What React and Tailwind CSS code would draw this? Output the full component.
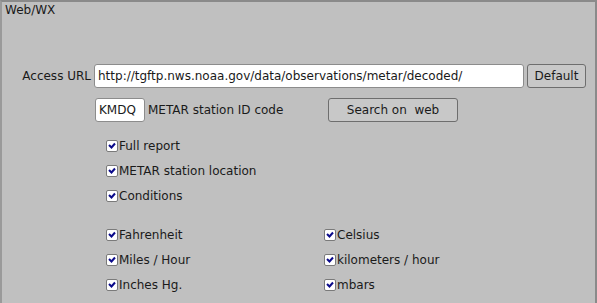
import React from "react";

function Check({ label }) {
  return (
    <div className="flex items-center h-[25px]">
      <span className="w-[12px] h-[12px] bg-white border border-[#7a7a7a] rounded-[2px] flex items-center justify-center mr-[1px]">
        <svg width="8" height="7" viewBox="0 0 8 7">
          <path d="M1 3 L3.5 5.5 L7 1.5" stroke="#0a0a8a" strokeWidth="2" fill="none" />
        </svg>
      </span>
      <span>{label}</span>
    </div>
  );
}

export default function App() {
  return (
    <div
      className="w-[597px] h-[303px] bg-[#c0c0c0] text-[#1a1a1a] text-[12px] overflow-hidden"
      style={{ fontFamily: '"DejaVu Sans", sans-serif' }}
    >
      <div className="h-[320px] border-t-2 border-l-2 border-r-2 border-[#8a8a8a] border-l-[#9a9a9a]">
        <div className="pl-[3px] pt-[1px] leading-[14px]">Web/WX</div>
        <div className="flex items-center mt-[47px] h-[24px]">
          <div className="w-[91px] text-right pr-[2px] text-[12px]">Access URL</div>
          <div className="w-[430px] h-[24px] bg-white border border-[#8c8c8c] rounded-[3px] flex items-center pl-[3px] ml-[1px]">
            http://tgftp.nws.noaa.gov/data/observations/metar/decoded/
          </div>
          <button className="ml-[3px] w-[59px] h-[24px] bg-[#c8c8c8] border border-[#6e6e6e] rounded-[3px] flex items-center justify-center">
            Default
          </button>
        </div>
        <div className="flex items-center mt-[10px] h-[24px]">
          <div className="ml-[93px] w-[50px] h-[24px] bg-white border border-[#8c8c8c] rounded-[3px] flex items-center pl-[3px]">
            KMDQ
          </div>
          <div className="ml-[3px] w-[180px]">METAR station ID code</div>
          <button className="w-[130px] h-[24px] bg-[#c8c8c8] border border-[#6e6e6e] rounded-[3px] flex items-center justify-center">
            Search on&nbsp;&nbsp;web
          </button>
        </div>
        <div className="ml-[104px] mt-[11px] flex flex-col">
          <Check label="Full report" />
          <Check label="METAR station location" />
          <Check label="Conditions" />
        </div>
        <div className="ml-[104px] mt-[14px] grid grid-cols-[218px_1fr]">
          <Check label="Fahrenheit" />
          <Check label="Celsius" />
          <Check label="Miles / Hour" />
          <Check label="kilometers / hour" />
          <Check label="Inches Hg." />
          <Check label="mbars" />
        </div>
      </div>
    </div>
  );
}
